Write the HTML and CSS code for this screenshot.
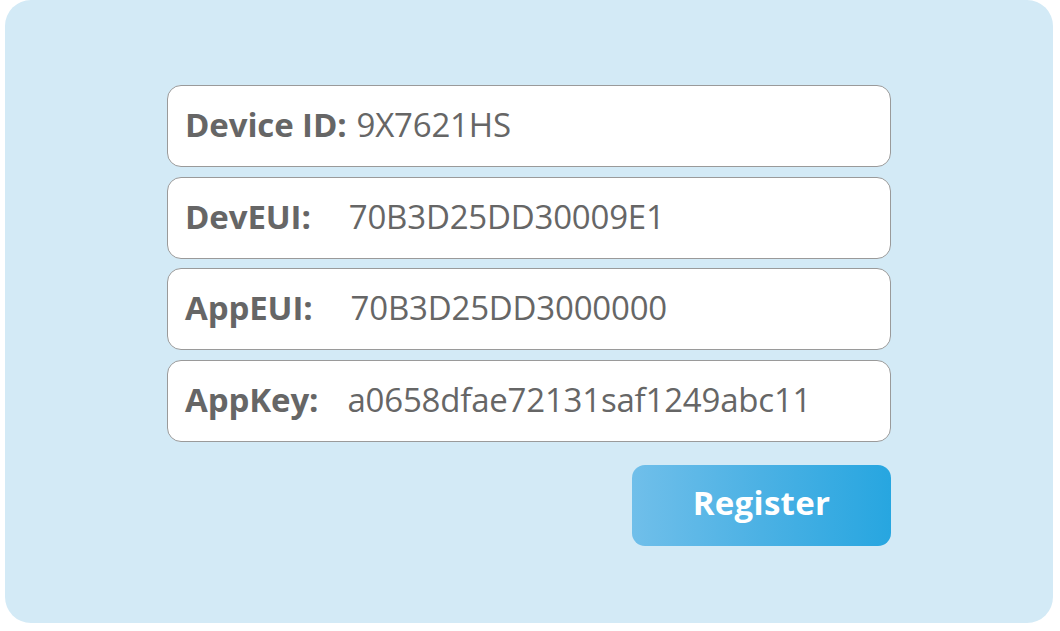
FILE: index.html
```html
<!DOCTYPE html>
<html>
<head>
<meta charset="utf-8">
<link rel="stylesheet" href="styles.css">
</head>
<body>
<div class="panel">
  <form class="form">
    <div class="field"><span class="label">Device ID:</span><span class="value v1">9X7621HS</span></div>
    <div class="field"><span class="label">DevEUI:</span><span class="value v2">70B3D25DD30009E1</span></div>
    <div class="field"><span class="label">AppEUI:</span><span class="value v3">70B3D25DD3000000</span></div>
    <div class="field"><span class="label">AppKey:</span><span class="value v4">a0658dfae72131saf1249abc11</span></div>
    <div class="actions"><button type="button" class="btn">Register</button></div>
  </form>
</div>
</body>
</html>
```
FILE: styles.css
```css
html, body { margin: 0; padding: 0; background: #ffffff; }
body { font-family: "Open Sans", "Noto Sans", sans-serif; }
.panel {
  margin-left: 5px;
  width: 1048px;
  height: 623px;
  background: #d3eaf6;
  border-radius: 26px;
  box-sizing: border-box;
  padding: 85px 0 0 162px;
}
.form { width: 724px; display: flex; flex-direction: column; gap: 9.7px; }
.field {
  box-sizing: border-box;
  height: 82px;
  background: #fff;
  border: 1px solid #9a9a9a;
  border-radius: 14px;
  display: flex;
  align-items: center;
  padding: 0 0 3px 17px;
  color: #666;
  font-size: 33px;
}
.label { font-weight: 700; letter-spacing: -0.1px; }
.value { font-weight: 400; letter-spacing: -0.2px; }
.v1 { margin-left: 10px; }
.v2 { margin-left: 38px; }
.v3 { margin-left: 38px; }
.v4 { margin-left: 29px; }
.actions { display: flex; justify-content: flex-end; margin-top: 13px; }
.btn {
  width: 259px;
  height: 81px;
  border: 0;
  border-radius: 13px;
  background: linear-gradient(90deg, #70bfea 0%, #4bb1e4 50%, #27a6e0 100%);
  color: #fff;
  font-family: "Open Sans", "Noto Sans", sans-serif;
  font-weight: 700;
  font-size: 33px;
  letter-spacing: 0.3px;
  padding: 0 0 5px 0;
}
```
